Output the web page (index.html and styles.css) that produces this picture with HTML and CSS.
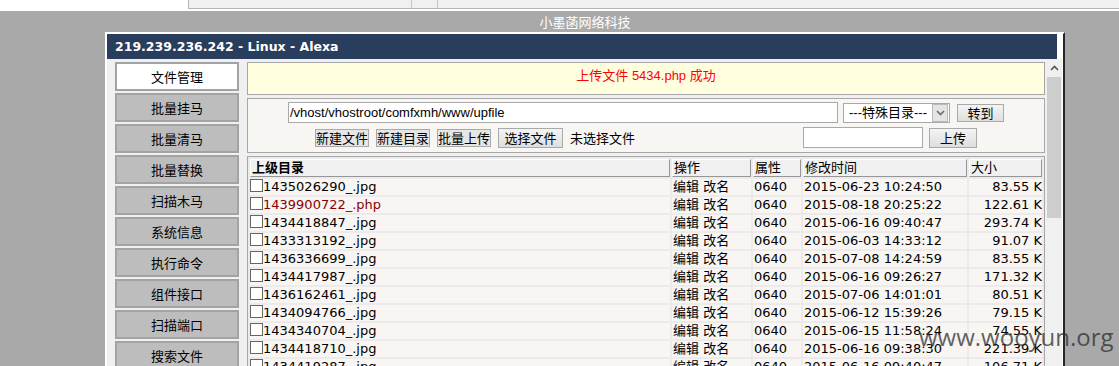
FILE: index.html
```html
<!DOCTYPE html>
<html>
  <head>
    <meta charset="utf-8">
    <title>小墨菡网络科技</title>
    <link rel="stylesheet" href="styles.css">
  </head>
  <body>
    <div class="chrome">
      <div class="tabbar">
        <div class="tab"></div>
        <div class="tab narrow"></div>
      </div>
    </div>
    <div class="site-title">小墨菡网络科技</div>
    <div class="window">
      <div class="win-header">219.239.236.242 - Linux - Alexa</div>
      <div class="frame">
        <div class="sidebar">
          <a class="side-btn active" href="#">文件管理</a>
          <a class="side-btn" href="#">批量挂马</a>
          <a class="side-btn" href="#">批量清马</a>
          <a class="side-btn" href="#">批量替换</a>
          <a class="side-btn" href="#">扫描木马</a>
          <a class="side-btn" href="#">系统信息</a>
          <a class="side-btn" href="#">执行命令</a>
          <a class="side-btn" href="#">组件接口</a>
          <a class="side-btn" href="#">扫描端口</a>
          <a class="side-btn" href="#">搜索文件</a>
          <a class="side-btn" href="#">Linux提权</a>
        </div>

        <div class="main">
          <div class="msg">上传文件 5434.php 成功</div>

          <div class="toolbar">
            <div class="tool-row first">
              <input class="path" type="text" value="/vhost/vhostroot/comfxmh/www/upfile">
              <div class="select">
                <span class="select-text">---特殊目录---</span>
                <span class="select-arrow">
                  <svg width="9" height="6" viewBox="0 0 9 6"><path d="M1 1 L4.5 4.5 L8 1" fill="none" stroke="#6b6b6b" stroke-width="1.6"/></svg>
                </span>
              </div>
              <button class="btn go">转到</button>
            </div>
            <div class="tool-row second">
              <div class="left-group">
                <button class="btn small">新建文件</button>
                <button class="btn small">新建目录</button>
                <button class="btn small">批量上传</button>
                <button class="btn pick">选择文件</button>
                <span class="no-file">未选择文件</span>
              </div>
              <div class="right-group">
                <input class="upname" type="text">
                <button class="btn up">上传</button>
              </div>
            </div>
          </div>

          <table class="files">
            <colgroup>
              <col class="c-name">
              <col class="c-op">
              <col class="c-attr">
              <col class="c-time">
              <col class="c-size">
            </colgroup>
            <tr>
              <th class="parent">上级目录</th>
              <th>操作</th>
              <th>属性</th>
              <th>修改时间</th>
              <th>大小</th>
            </tr>
            <tr>
              <td><input type="checkbox">1435026290_.jpg</td>
              <td>编辑 改名</td><td>0640</td><td>2015-06-23 10:24:50</td><td class="size">83.55 K</td>
            </tr>
            <tr>
              <td><input type="checkbox"><span class="php">1439900722_.php</span></td>
              <td>编辑 改名</td><td>0640</td><td>2015-08-18 20:25:22</td><td class="size">122.61 K</td>
            </tr>
            <tr>
              <td><input type="checkbox">1434418847_.jpg</td>
              <td>编辑 改名</td><td>0640</td><td>2015-06-16 09:40:47</td><td class="size">293.74 K</td>
            </tr>
            <tr>
              <td><input type="checkbox">1433313192_.jpg</td>
              <td>编辑 改名</td><td>0640</td><td>2015-06-03 14:33:12</td><td class="size">91.07 K</td>
            </tr>
            <tr>
              <td><input type="checkbox">1436336699_.jpg</td>
              <td>编辑 改名</td><td>0640</td><td>2015-07-08 14:24:59</td><td class="size">83.55 K</td>
            </tr>
            <tr>
              <td><input type="checkbox">1434417987_.jpg</td>
              <td>编辑 改名</td><td>0640</td><td>2015-06-16 09:26:27</td><td class="size">171.32 K</td>
            </tr>
            <tr>
              <td><input type="checkbox">1436162461_.jpg</td>
              <td>编辑 改名</td><td>0640</td><td>2015-07-06 14:01:01</td><td class="size">80.51 K</td>
            </tr>
            <tr>
              <td><input type="checkbox">1434094766_.jpg</td>
              <td>编辑 改名</td><td>0640</td><td>2015-06-12 15:39:26</td><td class="size">79.15 K</td>
            </tr>
            <tr>
              <td><input type="checkbox">1434340704_.jpg</td>
              <td>编辑 改名</td><td>0640</td><td>2015-06-15 11:58:24</td><td class="size">74.55 K</td>
            </tr>
            <tr>
              <td><input type="checkbox">1434418710_.jpg</td>
              <td>编辑 改名</td><td>0640</td><td>2015-06-16 09:38:30</td><td class="size">221.39 K</td>
            </tr>
            <tr>
              <td><input type="checkbox">1434419287_.jpg</td>
              <td>编辑 改名</td><td>0640</td><td>2015-06-16 09:40:47</td><td class="size">106.71 K</td>
            </tr>
          </table>
        </div>

        <div class="scrollbar">
          <div class="scroll-up">
            <svg width="9" height="6" viewBox="0 0 9 6"><path d="M1 5 L4.5 1.5 L8 5" fill="none" stroke="#555" stroke-width="1.6"/></svg>
          </div>
          <div class="thumb"></div>
        </div>
      </div>
    </div>

    <div class="watermark">www.wooyun.org</div>
  </body>
</html>
```

FILE: styles.css
```css
body {
  margin: 0;
  height: 366px;
  overflow: hidden;
  position: relative;
  background-color: #a9a9a9;
  font-family: "DejaVu Sans", "Noto Sans CJK SC", sans-serif;
  font-size: 13px;
  color: #000;
}

/* browser tab strip at the very top */
.chrome {
  height: 11px;
  background-color: #fff;
}

.tabbar {
  display: flex;
  height: 8px;
  margin-left: 188px;
  background-color: #f0f0f0;
  border-left: 1px solid #b4b4b4;
  border-bottom: 1px solid #b4b4b4;
}

.tab {
  width: 222px;
  border-right: 1px solid #c6c6c6;
}

.tab.narrow {
  width: 25px;
}

.site-title {
  width: 960px;
  height: 21px;
  margin-left: 105px;
  line-height: 21px;
  text-align: center;
  color: #fff;
  font-family: "Noto Sans CJK SC", sans-serif;
  font-size: 13px;
}

.window {
  width: 955px;
  margin-left: 105px;
  padding-right: 1px;
  background-color: #fff;
  border-top: 2px solid #fff;
  border-left: 2px solid #fff;
  border-right: 2px solid #262626;
}

.win-header {
  width: 942px;
  height: 25px;
  padding-left: 8px;
  background-color: #293d5c;
  color: #fff;
  font-weight: bold;
  font-size: 12.5px;
  line-height: 25px;
}

.frame {
  display: flex;
  height: 307px;
  overflow: hidden;
  background-color: #f0f0f0;
}

.sidebar {
  display: flex;
  flex-direction: column;
  gap: 2px;
  width: 124px;
  margin-left: 8px;
  padding-top: 3px;
}

.side-btn {
  flex-shrink: 0;
  height: 29px;
  box-sizing: border-box;
  border: 2px solid #a3a3a3;
  background-color: #bdbdbd;
  color: #000;
  text-align: center;
  text-decoration: none;
  line-height: 25px;
  font-family: "Noto Sans CJK SC", sans-serif;
  font-size: 13px;
}

.side-btn.active {
  background-color: #fff;
}

.main {
  width: 798px;
  margin-left: 8px;
  padding-top: 3px;
}

.msg {
  height: 33px;
  box-sizing: border-box;
  margin-bottom: 3px;
  padding-top: 5px;
  border: 1px solid #a7a7a7;
  background-color: #ffffe0;
  color: #f00;
  text-align: center;
  line-height: 16px;
  font-family: "Liberation Sans", "Noto Sans CJK SC", sans-serif;
}

.toolbar {
  display: flex;
  flex-direction: column;
  gap: 4px;
  height: 55px;
  box-sizing: border-box;
  margin-bottom: 3px;
  padding-top: 3px;
  border: 1px solid #a7a7a7;
  background-color: #f8f6f3;
}

.tool-row {
  display: flex;
  align-items: center;
  height: 21px;
}

.tool-row.first {
  justify-content: center;
}

.tool-row.second {
  justify-content: space-between;
  padding: 0 67px;
}

.left-group,
.right-group {
  display: flex;
  align-items: center;
}

.path,
.upname {
  height: 21px;
  box-sizing: border-box;
  margin: 0;
  padding: 0 1px;
  border: 1px solid #a9a9a9;
  background-color: #fff;
  color: #000;
  font-family: "Liberation Sans", sans-serif;
  font-size: 13px;
  outline: none;
}

.path {
  width: 550px;
}

.upname {
  width: 120px;
}

.select {
  display: flex;
  align-items: center;
  width: 107px;
  height: 20px;
  box-sizing: border-box;
  margin-left: 5px;
  border: 1px solid #a9a9a9;
  background-color: #fff;
}

.select-text {
  flex: 1;
  padding-left: 5px;
  font-family: "Liberation Sans", "Noto Sans CJK SC", sans-serif;
  line-height: 16px;
}

.select-arrow {
  display: flex;
  align-items: center;
  justify-content: center;
  width: 14px;
  height: 16px;
  margin-right: 1px;
  border: 1px solid #b9b9b9;
  background-color: #e4e4e4;
}

.btn {
  height: 18px;
  box-sizing: border-box;
  margin: 0;
  padding: 0;
  border: 1px solid #a9a9a9;
  background: linear-gradient(#f4f4f4, #dedede);
  color: #000;
  font-family: "Noto Sans CJK SC", sans-serif;
  font-size: 13px;
  line-height: 16px;
}

.btn.go {
  width: 47px;
  margin-left: 7px;
}

.btn.small {
  width: 54px;
  margin-right: 7px;
  background: #e6e6e6;
}

.btn.pick {
  width: 65px;
  height: 20px;
}

.btn.up {
  width: 48px;
  height: 20px;
  margin-left: 6px;
}

.no-file {
  margin-left: 7px;
  font-family: "Noto Sans CJK SC", sans-serif;
}

/* file list */
.files {
  width: 798px;
  table-layout: fixed;
  border-collapse: separate;
  border-spacing: 2px;
  border: 1px solid #a7a7a7;
  background-color: #ebebeb;
}

.c-name { width: 420px; }
.c-op { width: 79px; }
.c-attr { width: 48px; }
.c-time { width: 164px; }
.c-size { width: 73px; }

.files th {
  padding: 0;
  border: 1px solid;
  border-color: #fff #969696 #969696 #fff;
  background-color: #f0f0f0;
  text-align: left;
  text-indent: 1px;
  font-weight: normal;
  line-height: 16px;
  white-space: nowrap;
}

.files th.parent {
  font-weight: bold;
}

.files td {
  padding: 0;
  height: 16px;
  background-color: #f8f5f2;
  line-height: 16px;
  text-indent: 1px;
  white-space: nowrap;
  overflow: hidden;
}

.files td:first-child {
  text-indent: 0;
}

.files td.size {
  text-align: right;
}

.files input[type="checkbox"] {
  -webkit-appearance: none;
  appearance: none;
  width: 13px;
  height: 13px;
  margin: 0;
  vertical-align: top;
  border: 1px solid #666;
  background-color: #fff;
}

.php {
  color: #8b0000;
}

.scrollbar {
  display: flex;
  flex-direction: column;
  width: 16px;
  margin-left: 1px;
  background-color: #f0f0f0;
}

.scroll-up {
  display: flex;
  align-items: center;
  justify-content: center;
  height: 18px;
}

.thumb {
  height: 141px;
  margin: 0 1px;
  background-color: #cdcdcd;
}

.watermark {
  position: absolute;
  left: 919px;
  top: 320px;
  font-family: "Open Sans", sans-serif;
  font-size: 24px;
  color: rgba(45, 45, 45, 0.75);
}
```
